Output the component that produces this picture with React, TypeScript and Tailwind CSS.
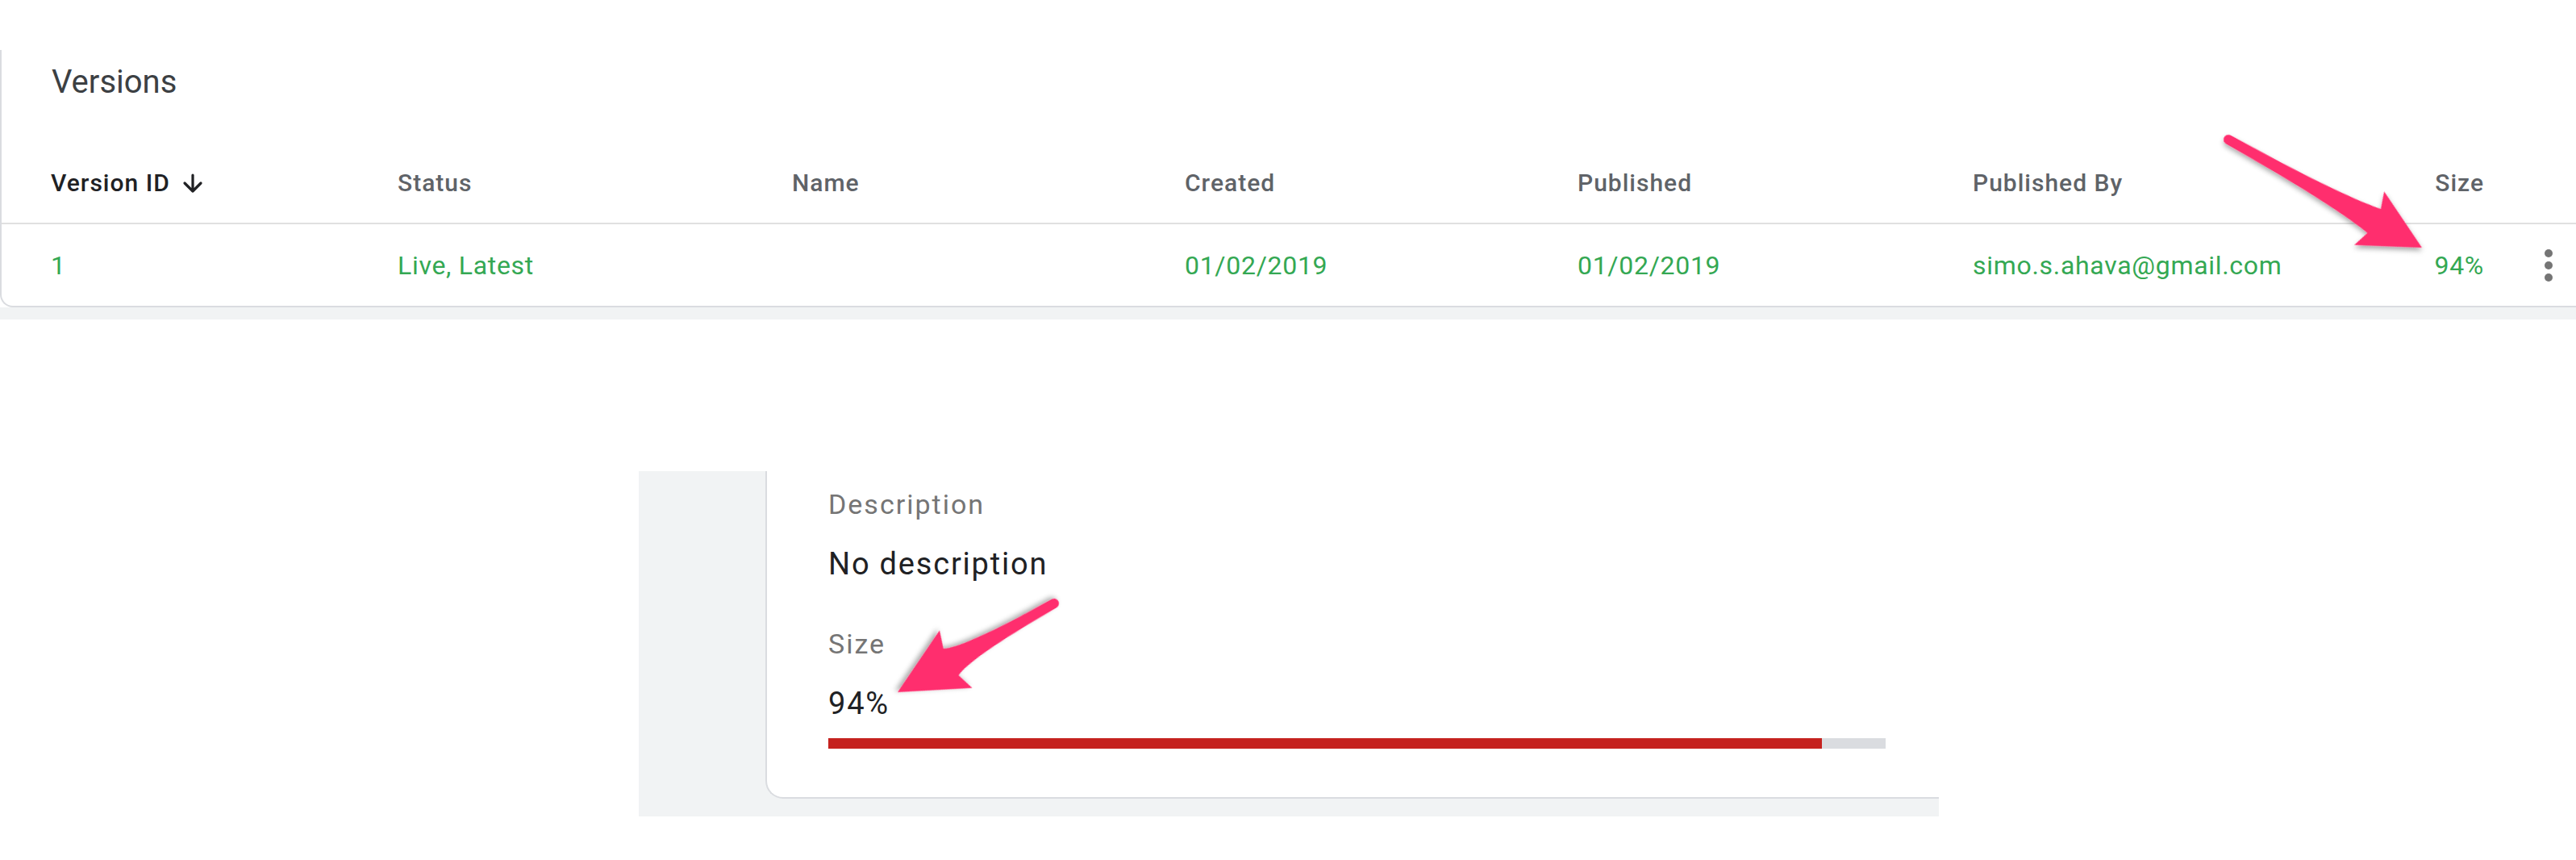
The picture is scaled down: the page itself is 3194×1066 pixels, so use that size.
import React from 'react'

const GREEN = 'text-[#34a853]'

// skitch style arrow, drawn pointing +x from its tail and then rotated into place
function Arrow({ x1, y1, x2, y2, barb, spread, neck }: { x1: number; y1: number; x2: number; y2: number; barb: number; spread: number; neck: number }) {
  const len = Math.hypot(x2 - x1, y2 - y1)
  const angle = (Math.atan2(y2 - y1, x2 - x1) * 180) / Math.PI
  const nx = barb + 7
  const d = `M0,-6 Q${len * 0.55},-7 ${nx},-${neck} L${barb},-${spread} L${len},0 L${barb},${spread} L${nx},${neck} Q${len * 0.55},7 0,6 Z`
  return (
    <g transform={`translate(${x1} ${y1}) rotate(${angle})`} filter="url(#arrowShadow)">
      <circle cx="0" cy="0" r="6" fill="#ff2d6e" />
      <path d={d} fill="#ff2d6e" strokeLinejoin="round" />
    </g>
  )
}

function Kebab() {
  return (
    <div className="flex flex-col gap-[5px] ml-[75px]">
      <span className="w-[10px] h-[10px] rounded-full bg-[#757575]" />
      <span className="w-[10px] h-[10px] rounded-full bg-[#757575]" />
      <span className="w-[10px] h-[10px] rounded-full bg-[#757575]" />
    </div>
  )
}

export default function App() {
  const size = 94

  return (
    <div className="relative w-[3194px] h-[1066px] overflow-hidden bg-white font-['Roboto','Liberation_Sans',sans-serif]">
      {/* VERSIONS CARD */}
      <div className="h-[62px]" />
      <div className="border-l-2 border-b-2 border-[#dadce0] rounded-bl-[16px] bg-white">
        <div className="pt-[20px] pl-[62px] text-[40px] leading-[40px] text-[#3c4043]">Versions</div>

        <div className="h-[156px] flex items-end pb-[34px] pl-[61px] border-b-2 border-[#e0e0e0] text-[30px] leading-[30px] font-medium tracking-[1px] text-[#5f6368]">
          <div className="w-[430px] flex items-center gap-[14px] text-[#202124]">
            <span>Version ID</span>
            <svg width="28" height="26" viewBox="0 0 28 26" fill="none" stroke="#202124" strokeWidth="3.2" strokeLinecap="round" strokeLinejoin="round">
              <path d="M14 3v20M4 13l10 10 10-10" />
            </svg>
          </div>
          <div className="w-[489px]">Status</div>
          <div className="w-[487px]">Name</div>
          <div className="w-[487px]">Created</div>
          <div className="w-[490px]">Published</div>
          <div className="flex-1">Published By</div>
          <div className="text-right">Size</div>
          <div className="w-[114px]" />
        </div>

        <div className={`h-[101px] flex items-center pl-[61px] text-[32px] leading-[32px] tracking-[0.7px] ${GREEN}`}>
          <div className="w-[430px]">1</div>
          <div className="w-[489px]">Live, Latest</div>
          <div className="w-[487px]"></div>
          <div className="w-[487px]">01/02/2019</div>
          <div className="w-[490px]">01/02/2019</div>
          <div className="flex-1">simo.s.ahava@gmail.com</div>
          <div className="text-right">{size}%</div>
          <div className="w-[114px]">
            <Kebab />
          </div>
        </div>
      </div>
      <div className="h-[15px] bg-[#f1f3f4]" />

      <div className="h-[188px]" />

      {/* VERSION DETAIL PANEL */}
      <div className="ml-[792px] w-[1612px] bg-[#f1f3f4] pl-[157px] pb-[22px]">
        <div className="bg-white border-l-2 border-b-2 border-[#dadce0] rounded-bl-[22px] pl-[76px] pt-[24px] pb-[60px]">
          <div className="text-[34px] leading-[34px] tracking-[2px] text-[#757575]">Description</div>
          <div className="mt-[38px] text-[38px] leading-[38px] tracking-[1.8px] text-[#202124]">No description</div>
          <div className="mt-[63px] text-[34px] leading-[34px] tracking-[2px] text-[#757575]">Size</div>
          <div className="mt-[38px] text-[38px] leading-[38px] tracking-[1.8px] text-[#202124]">{size}%</div>
          <div className="mt-[24px] w-[1311px] h-[13px] bg-[#dadce0]">
            <div className="h-full bg-[#c5221f]" style={{ width: `${size}%` }} />
          </div>
        </div>
      </div>

      {/* ANNOTATION ARROWS */}
      <svg className="absolute inset-0 pointer-events-none" width="3194" height="1066">
        <defs>
          <filter id="arrowShadow" x="-20%" y="-50%" width="140%" height="200%">
            <feDropShadow dx="2" dy="3" stdDeviation="3" floodColor="#000" floodOpacity="0.35" />
          </filter>
        </defs>
        <Arrow x1={2763} y1={173} x2={3003} y2={307} barb={200} spread={38} neck={17} />
        <Arrow x1={1307} y1={748} x2={1113} y2={858} barb={140} spread={41} neck={19} />
      </svg>
    </div>
  )
}
